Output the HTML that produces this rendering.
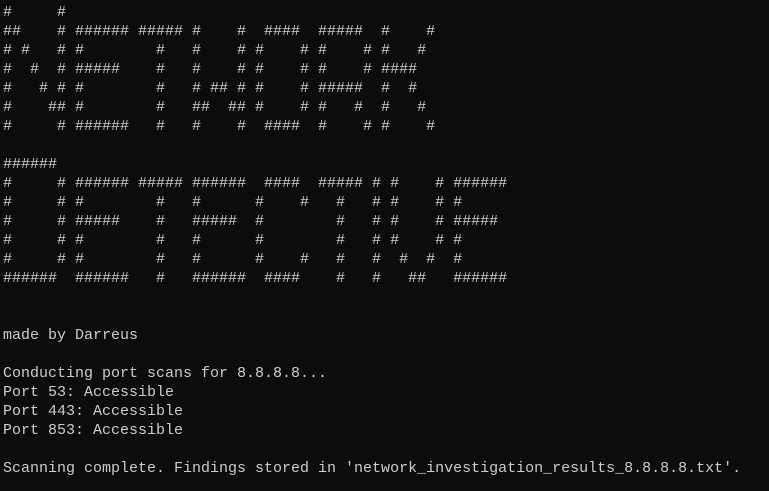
<!DOCTYPE html>
<html><head><meta charset="utf-8"><style>
html,body{margin:0;padding:0;background:#0c0c0c;width:769px;height:491px;overflow:hidden}
pre{margin:0;padding:3px 0 0 3px;font-family:"Liberation Mono",monospace;font-size:15px;line-height:19px;color:#cccccc}
</style></head><body><pre>#     #
##    # ###### ##### #    #  ####  #####  #    #
# #   # #        #   #    # #    # #    # #   #
#  #  # #####    #   #    # #    # #    # ####
#   # # #        #   # ## # #    # #####  #  #
#    ## #        #   ##  ## #    # #   #  #   #
#     # ######   #   #    #  ####  #    # #    #

######
#     # ###### ##### ######  ####  ##### # #    # ######
#     # #        #   #      #    #   #   # #    # #
#     # #####    #   #####  #        #   # #    # #####
#     # #        #   #      #        #   # #    # #
#     # #        #   #      #    #   #   #  #  #  #
######  ######   #   ######  ####    #   #   ##   ######


made by Darreus

Conducting port scans for 8.8.8.8...
Port 53: Accessible
Port 443: Accessible
Port 853: Accessible

Scanning complete. Findings stored in 'network_investigation_results_8.8.8.8.txt'.</pre></body></html>
